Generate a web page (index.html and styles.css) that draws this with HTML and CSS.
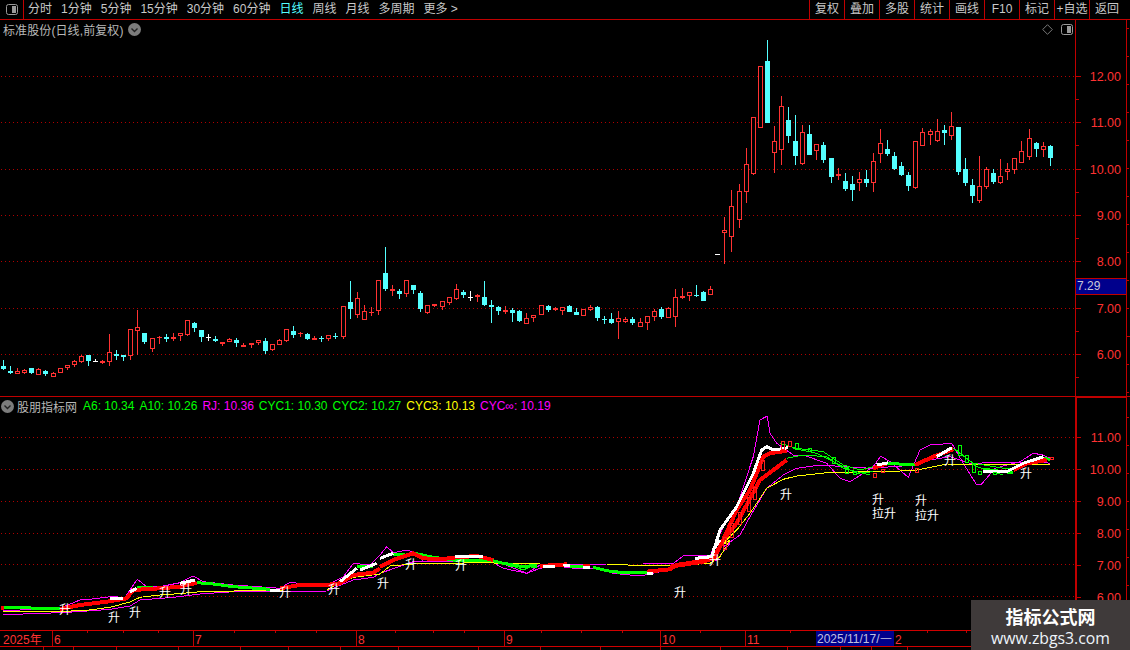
FILE: index.html
```html
<!DOCTYPE html>
<html lang="zh">
<head>
<meta charset="utf-8">
<title>股朋指标网</title>
<link rel="stylesheet" href="styles.css">
</head>
<body>
<div class="app">
  <header class="toolbar">
    <div class="panel-toggle">
      <svg class="toggle-icon" width="12" height="11" viewBox="0 0 12 11"><rect class="toggle-frame" x="0.5" y="0.5" width="11" height="10" rx="2"/><rect class="toggle-fill" x="6" y="2" width="4" height="7"/></svg>
    </div>
    <nav class="periods">
      <span>分时</span><span>1分钟</span><span>5分钟</span><span>15分钟</span><span>30分钟</span><span>60分钟</span><span class="active">日线</span><span>周线</span><span>月线</span><span>多周期</span><span>更多 &gt;</span>
    </nav>
    <nav class="actions">
      <span>复权</span><span>叠加</span><span>多股</span><span>统计</span><span>画线</span><span>F10</span><span>标记</span><span>+自选</span><span>返回</span>
    </nav>
  </header>

  <section class="pane pane-price">
    <div class="plot">
      <svg id="price-plot" class="canvas" width="1075" height="376" viewBox="0 20 1075 376"></svg>
      <div class="pane-head">
        <span class="head-title head-title-wide">标准股份(日线,前复权)</span>
        <svg class="chev" width="13" height="13" viewBox="0 0 13 13"><circle class="chev-disc" cx="6.5" cy="6.5" r="6.5"/><path class="chev-mark" d="M3.5 5.5l3 3 3-3"/></svg>
      </div>
      <div class="pane-tools">
        <svg width="11" height="11" viewBox="0 0 11 11"><path class="tool-line" d="M5.5 .7L10.3 5.5 5.5 10.3 .7 5.5z"/></svg>
        <svg class="toggle-icon" width="12" height="11" viewBox="0 0 12 11"><rect class="toggle-frame" x="0.5" y="0.5" width="11" height="10" rx="2"/><rect class="toggle-fill" x="6" y="2" width="4" height="7"/></svg>
      </div>
    </div>
    <svg id="price-axis" class="axis" width="50" height="376" viewBox="1076 20 50 376"></svg>
    <svg id="price-side" class="side" width="3" height="376" viewBox="0 0 3 376"></svg>
  </section>

  <section class="pane pane-indicator">
    <div class="plot">
      <svg id="ind-plot" class="canvas" width="1075" height="233" viewBox="0 397 1075 233"></svg>
      <div class="pane-head head-ind">
        <svg class="chev" width="13" height="13" viewBox="0 0 13 13"><circle class="chev-disc" cx="6.5" cy="6.5" r="6.5"/><path class="chev-mark" d="M3.5 5.5l3 3 3-3"/></svg>
        <span class="head-title">股朋指标网</span>
        <span class="vals">
          <span class="c-green">A6: 10.34</span><span class="c-green">A10: 10.26</span><span class="c-mag">RJ: 10.36</span><span class="c-green">CYC1: 10.30</span><span class="c-green">CYC2: 10.27</span><span class="c-yel">CYC3: 10.13</span><span class="c-mag">CYC∞: 10.19</span>
        </span>
      </div>
    </div>
    <svg id="ind-axis" class="axis" width="50" height="233" viewBox="1076 397 50 233"></svg>
    <svg id="ind-side" class="side" width="3" height="233" viewBox="0 0 3 233"></svg>
  </section>

  <svg id="time-axis" class="time-axis" width="1130" height="17" viewBox="0 630 1130 17"></svg>
  <svg id="bottom-strip" class="bottom-strip" width="1130" height="3" viewBox="0 647 1130 3"></svg>

  <aside class="watermark">
    <div class="wm-title">指标公式网</div>
    <div class="wm-url">www.zbgs3.com</div>
  </aside>
</div>
<script src="script.js"></script>
</body>
</html>
```

FILE: styles.css
```css
* { box-sizing: border-box; }
html, body { margin: 0; padding: 0; background: #000; }
body { width: 1130px; height: 650px; overflow: hidden; font-family: "Liberation Sans", "Noto Sans CJK SC", sans-serif; color: #c8c8c8; }
svg { display: block; shape-rendering: crispEdges; }
.app { position: relative; width: 1130px; height: 650px; display: flex; flex-direction: column; }

.toolbar { height: 20px; flex: none; display: flex; align-items: stretch; border-bottom: 1px solid #c00000; font-size: 12px; line-height: 19px; }
.panel-toggle { width: 24px; display: flex; align-items: center; justify-content: center; border-right: 1px solid #c00000; }
.periods { display: flex; gap: 9px; padding-left: 4px; flex: 1; white-space: nowrap; }
.periods .active { color: #54ffff; }
.actions { display: flex; }
.actions span { width: 35px; text-align: center; border-left: 1px solid #c00000; white-space: nowrap; }
.actions span:last-child { width: 41px; padding-right: 6px; }

.toggle-frame { fill: none; stroke: #9a9a9a; stroke-width: 1; shape-rendering: auto; }
.toggle-fill { fill: #9a9a9a; }
.tool-line { fill: none; stroke: #7a7a7a; stroke-width: 1; shape-rendering: auto; }
.chev { flex: none; shape-rendering: auto; }
.chev-disc { fill: #7c7c7c; }
.chev-mark { fill: none; stroke: #222; stroke-width: 1.4; }

.pane { display: flex; flex: none; border-bottom: 1px solid #c00000; }
.pane-price { height: 377px; }
.pane-indicator { height: 233px; border-bottom: 0; }
.plot { position: relative; width: 1075px; flex: none; }
.canvas { background: #000; }
.axis { flex: none; width: 52px; border-left: 1px solid #c00000; border-right: 1px solid #c00000; }
.side { flex: none; }

.pane-head { position: absolute; left: 3px; top: 0; height: 18px; display: flex; align-items: center; gap: 4px; font-size: 12px; white-space: nowrap; }
.head-ind { left: 1px; top: 0; gap: 3px; }
.head-title { color: #b8b8b8; }
.head-title-wide { letter-spacing: .1px; }
.vals { display: flex; gap: 5px; margin-left: 3px; font-size: 12px; }
.c-green { color: #00ff00; }
.c-mag { color: #ff00ff; }
.c-yel { color: #ffff00; }
.pane-tools { position: absolute; right: 2px; top: 4px; display: flex; gap: 8px; }

.dots { stroke: #b00000; stroke-width: 1; stroke-dasharray: 1 3; fill: none; shape-rendering: auto; }
.wick-c, .body-c { fill: #54ffff; }
.wick-r, .body-r, .wick-f, .body-f { fill: #ff3232; }
.wick-w, .body-w { fill: #ffffff; }
.body-in { fill: #000; }
.ln { fill: none; stroke-linejoin: round; }
.ln-mag { stroke: #ff00ff; stroke-width: 1; }
.ln-yel { stroke: #ffff00; stroke-width: 1; }
.ln-grn { stroke: #00ff00; stroke-width: 3; }
.ln-grn-thin { stroke: #00ff00; stroke-width: 1; }
.ln-red { stroke: #ff0000; stroke-width: 4; }
.ln-wht { stroke: #ffffff; stroke-width: 3; }
.bx-grn { fill: none; stroke: #00ff00; stroke-width: 1; }
.bx-red { fill: none; stroke: #ff2020; stroke-width: 1; }
.rise { font: 12px "Noto Sans CJK SC", sans-serif; fill: #fff; text-anchor: middle; }
.tick { stroke: #c00000; stroke-width: 1; }
.tick-bright { stroke: #d00000; stroke-width: 1; }
.price-txt { font: 12.5px "Liberation Sans", sans-serif; fill: #ff3232; text-anchor: end; }
.tag-bg { fill: #00008c; stroke: #c00000; stroke-width: 1; }
.tag-txt { font: 12px "Liberation Sans", sans-serif; fill: #c8c8d8; }
.time-txt { font: 12px "Liberation Sans", "Noto Sans CJK SC", sans-serif; fill: #ff3232; }
.date-bg { fill: #00008c; }
.date-txt { font: 12px "Liberation Sans", sans-serif; fill: #c0c0e0; }

.watermark { position: absolute; right: 0; bottom: 0; width: 159px; height: 50px; background: #3f3a3a; display: flex; flex-direction: column; align-items: center; justify-content: center; gap: 1px; }
.wm-title { font: bold 18px/24px "Noto Sans CJK SC", sans-serif; color: #fff; }
.wm-url { font: 15.8px/18px "Open Sans", "Liberation Sans", sans-serif; color: #eef4fa; }
```

FILE: script.js
```js
var NS = "http://www.w3.org/2000/svg";
function el(svg, tag, attrs, text) {
  var n = document.createElementNS(NS, tag);
  for (var k in attrs) n.setAttribute(k, attrs[k]);
  if (text !== undefined) n.textContent = text;
  svg.appendChild(n);
  return n;
}
var pp = document.getElementById("price-plot");
var pa = document.getElementById("price-axis");
var ps = document.getElementById("price-side");
var ip = document.getElementById("ind-plot");
var ia = document.getElementById("ind-axis");
var is = document.getElementById("ind-side");
var ta = document.getElementById("time-axis");
var bs = document.getElementById("bottom-strip");

/* ---------- grid + axes ---------- */
[76,122,169,215,261,308,354].forEach(function (y) {
  el(pp, "line", {x1: 1, x2: 1075, y1: y + .5, y2: y + .5, "class": "dots"});
});
[437,469,501,533,564,596].forEach(function (y) {
  el(ip, "line", {x1: 1, x2: 1075, y1: y + .5, y2: y + .5, "class": "dots"});
});
[[12,76],[11,122],[10,169],[9,215],[8,261],[7,308],[6,354]].forEach(function (p) {
  var y = p[1];
  el(pa, "line", {x1: 1076, x2: 1081, y1: y + .5, y2: y + .5, "class": "tick"});
  el(pa, "line", {x1: 1076, x2: 1079, y1: y + 23.5, y2: y + 23.5, "class": "tick"});
  el(pa, "text", {x: 1121, y: y + 5, "class": "price-txt"}, p[0].toFixed(2));
});
el(ia, "line", {x1: 1076.5, x2: 1076.5, y1: 397, y2: 630, "class": "tick"});
el(ia, "line", {x1: 1076, x2: 1126, y1: 397.5, y2: 397.5, "class": "tick"});
[[11,437],[10,469],[9,501],[8,533],[7,565],[6,597]].forEach(function (p) {
  el(ia, "line", {x1: 1076, x2: 1081, y1: p[1] + .5, y2: p[1] + .5, "class": "tick"});
  el(ia, "text", {x: 1121, y: p[1] + 5, "class": "price-txt"}, p[0].toFixed(2));
});
el(pa, "rect", {x: 1075, y: 278.5, width: 52, height: 16, "class": "tag-bg"});
el(pa, "text", {x: 1077, y: 290, "class": "tag-txt"}, "7.29");

for (var y = 8; y < 376; y += 28) el(ps, "line", {x1: 0, x2: 2, y1: y + .5, y2: y + .5, "class": "tick"});
el(ps, "line", {x1: 0, x2: 3, y1: 316.5, y2: 316.5, "class": "tick"});
for (y = 20; y < 233; y += 28) el(is, "line", {x1: 0, x2: 2, y1: y + .5, y2: y + .5, "class": "tick"});

/* ---------- candles ---------- */
function candles(ox, oy, rows) {
  rows.forEach(function (r) {
    var cx = Math.floor(ox + r[0] / 3);
    var wt = Math.round(oy + r[1] / 3), bt = Math.round(oy + r[2] / 3);
    var bb = Math.round(oy + r[3] / 3), wb = Math.round(oy + r[4] / 3);
    var t = r[5];
    var h = Math.max(bb - bt, 1);
    if (wb > wt) el(pp, "rect", {x: cx, y: wt, width: 1, height: wb - wt, "class": "wick-" + t});
    el(pp, "rect", {x: cx - 2, y: bt, width: 5, height: h, "class": "body-" + t});
    if (t === "r" && h > 2) el(pp, "rect", {x: cx - 1, y: bt + 1, width: 3, height: h - 2, "class": "body-in"});
  });
}
candles(0, 240, [
[10,360,378,387,390,"c"],[31,378,393,399,402,"c"],[52,385,394,401,402,"r"],[73,387,391,398,402,"r"],
[94,384,384,398,401,"c"],[115,385,388,404,405,"r"],[136,390,393,402,407,"c"],[160,396,400,410,411,"r"],
[181,385,385,399,399,"r"],[202,375,376,384,390,"r"],[223,361,364,374,381,"r"],[244,346,349,365,369,"r"],
[265,345,345,363,378,"c"],[285,357,363,365,366,"w"],[307,360,364,369,372,"f"],[328,282,337,365,378,"r"],
[349,331,342,348,360,"c"],[370,344,345,350,363,"c"],[391,267,268,349,360,"r"],[412,210,262,272,344,"r"],
[433,279,279,306,312,"c"],[457,295,295,326,336,"r"],[478,288,290,293,312,"f"],[499,282,292,296,306,"c"],
[520,279,291,297,303,"f"],[541,280,280,287,303,"r"],[562,241,241,284,288,"r"],[583,246,250,264,276,"c"],
[604,270,270,291,306,"c"],[624,282,292,294,303,"w"],[646,288,297,303,306,"c"],[667,306,307,312,318,"f"],
[688,294,297,305,306,"r"],[709,294,300,309,321,"c"],[730,309,315,320,321,"f"],[754,309,309,315,324,"f"],
[775,300,301,308,315,"r"],[796,294,303,333,342,"c"],[817,312,312,330,333,"r"],[838,297,300,315,316,"r"],
[859,267,267,303,305,"r"],[880,258,273,285,294,"c"],[901,276,279,283,291,"f"],[922,279,282,297,300,"c"],
[943,288,294,300,300,"f"],[964,288,294,297,306,"c"],[985,285,286,296,303,"r"],[1006,279,288,291,297,"c"],
[1030,198,198,291,297,"r"],[1051,123,186,207,237,"c"],[1072,156,174,224,234,"r"],[1093,195,213,240,240,"r"],
[1114,201,216,219,228,"f"],[1135,120,120,212,225,"r"]
]);
candles(380, 260, [
[16,-39,40,87,92,"c"],[37,75,87,92,108,"f"],[58,87,93,102,117,"c"],[79,60,61,101,111,"r"],
[100,75,75,90,102,"c"],[121,94,99,147,156,"c"],[142,135,136,159,162,"r"],[163,132,133,137,141,"f"],
[187,123,124,141,150,"r"],[208,111,112,129,135,"r"],[229,72,87,117,120,"r"],[250,90,96,105,114,"c"],
[271,93,112,114,123,"w"],[292,102,105,110,126,"f"],[313,63,111,135,138,"c"],[334,120,135,141,189,"c"],
[355,138,141,153,165,"c"],[376,138,151,156,162,"f"],[397,144,150,159,186,"c"],[418,150,153,183,186,"c"],
[439,159,174,191,192,"r"],[460,165,166,173,186,"r"],[484,135,135,164,165,"r"],[505,135,138,150,156,"c"],
[526,141,145,151,153,"r"],[547,141,142,152,165,"r"],[568,135,138,156,156,"c"],[589,144,156,165,165,"c"],
[610,147,147,168,168,"r"],[631,135,142,149,153,"r"],[652,138,141,174,183,"c"],[673,168,177,179,192,"c"],
[694,159,177,189,192,"c"],[715,153,175,185,237,"r"],[736,171,177,185,189,"r"],[757,171,177,189,195,"c"],
[781,174,187,200,201,"r"],[802,168,169,188,210,"r"],[823,147,153,170,183,"r"],[844,141,147,171,177,"c"],
[865,141,145,173,174,"r"],[886,87,112,170,201,"r"],[907,84,108,114,117,"f"],[928,96,97,109,123,"r"],
[949,75,105,108,111,"c"],[970,93,96,123,123,"c"],[991,78,88,104,105,"r"]
]);
candles(700, 30, [
[51,673,673,675,675,"w"],[73,561,601,610,702,"r"],[94,480,529,622,665,"r"],[118,462,484,571,593,"r"],
[139,354,403,487,519,"r"],[160,262,262,433,434,"r"],[181,109,109,295,295,"r"],[202,30,93,278,278,"c"],
[223,289,334,370,428,"r"],[244,198,229,361,405,"r"],[265,231,270,317,339,"c"],[286,255,333,378,405,"c"],
[307,285,307,403,405,"r"],[328,285,312,375,375,"c"],[349,343,343,364,390,"r"],[370,336,345,390,399,"c"],
[394,384,384,441,459,"c"],[415,414,433,439,450,"r"],[436,429,453,477,483,"c"],[457,438,462,480,513,"c"],
[478,426,448,460,483,"r"],[499,420,447,459,471,"c"],[520,369,394,458,486,"r"],[541,297,340,373,399,"r"],
[562,330,357,372,378,"c"],[583,366,378,417,420,"c"],[604,396,408,435,438,"c"],[625,426,435,468,483,"c"],
[646,334,334,473,477,"r"],[667,294,307,347,348,"r"],[691,297,304,316,345,"r"],[712,267,304,334,336,"r"],
[733,285,300,309,345,"c"],[754,246,289,319,330,"r"],[775,291,291,426,435,"c"],[796,384,417,459,468,"c"],
[817,447,465,498,519,"c"],[838,378,469,513,519,"r"],[859,411,418,470,477,"r"],[880,417,429,456,462,"c"],
[901,387,439,458,462,"r"],[922,399,418,425,450,"r"],[943,384,385,421,432,"r"],[964,333,364,398,399,"r"],
[988,297,325,380,390,"r"],[1009,336,339,357,381,"c"],[1030,336,349,361,381,"r"],[1051,345,348,384,408,"c"]
]);

/* ---------- indicator lines ---------- */
function Z(ox, oy, a) {
  var out = [];
  for (var i = 0; i < a.length; i += 2) out.push((ox + a[i] / 3).toFixed(1) + "," + (oy + a[i + 1] / 3).toFixed(1));
  return out;
}
function line(cls, pts) { el(ip, "polyline", {points: pts.join(" "), "class": "ln " + cls}); }
var A = function (a) { return Z(0, 540, a); }, B = function (a) { return Z(380, 540, a); }, C = function (a) { return Z(670, 400, a); };

/* magenta upper */
line("ln-mag", A([10,212,180,205,240,180,270,178,330,170,375,172,412,118,440,140,480,140,540,128,580,108,610,125,700,135,840,145,870,127,940,135,985,133,1030,110,1060,70,1110,75,1140,45])
  .concat(B([20,20,40,38,80,30,105,38,130,65,300,65,320,60,370,72,440,100,480,75,680,72,790,72,880,70,910,48,990,45,1020,20]))
  .concat(C([120,468,160,380,200,320,250,170,270,60,292,48,300,100,320,130,370,165,400,165,470,190,510,235,540,245,580,220,610,200,632,168,660,185,715,232,750,150,780,135,845,130,880,190,920,255,935,252,975,205,1010,195,1050,185,1090,160,1120,165,1140,175])));
/* magenta lower */
line("ln-mag", A([10,224,180,218,250,214,330,208,390,198,420,180,520,172,600,162,700,155,850,155,980,153,1010,140,1060,120,1120,112,1140,100])
  .concat(B([100,65,330,62,370,85,440,100,480,85,530,78,590,86,650,85,700,100,780,108,840,95,880,78,980,60,1010,60,1050,10]))
  .concat(C([160,440,210,405,240,350,290,265,340,225,380,205,450,195,600,205,740,195,780,180,840,170,900,190,1100,185,1140,190])));
/* yellow */
line("ln-yel", A([10,214,180,214,250,212,330,202,390,186,420,172,480,165,550,160,600,155,850,150,980,150,1010,133,1060,112,1140,102])
  .concat(B([30,78,100,72,300,68,480,72,680,72,790,77,880,77,990,70,1020,50,1050,0]))
  .concat(C([150,440,200,390,240,340,290,265,340,238,380,228,470,218,600,215,730,212,790,200,830,192,1140,195])));

/* green */
[A([3,203,180,205]),A([410,142,460,142]),A([590,128,640,132,700,140,810,148]),A([905,134,985,136]),A([1070,78,1120,78]),
 B([40,42,75,45]),B([105,40,150,50,220,60,330,60,370,70,430,80,470,75]),B([570,78,610,80]),B([640,82,680,92,720,97,800,97]),
 C([650,190,740,195]),C([940,208,1030,218]),C([1120,175,1140,178])].forEach(function (p) { line("ln-grn", p); });
[C([330,130,380,145,460,155,520,195,570,210,610,200]),C([350,175,400,165,470,170,520,205,600,225]),
 C([850,145,910,190,1000,205,1030,205]),C([370,145,440,160,500,190,560,220,610,215]),C([860,150,920,200,1000,225]),
 B([370,68,430,90,470,72]),B([390,78,470,82])].forEach(function (p) { line("ln-grn-thin", p); });

/* red */
[A([3,205,12,205]),A([180,207,240,195,320,185,380,175,400,150,480,145,540,140,590,128]),A([840,145,900,135,980,135,1020,130,1060,105,1120,98,1140,85]),
 B([0,80,40,60,100,40,130,55,180,58,230,52,290,48,340,60]),B([480,78,530,75,560,73]),B([610,78,630,78]),B([800,95,870,88,890,75,950,65,1000,50,1020,20]),
 C([0,500,100,485,130,475,150,440,200,330,240,270,280,170,300,160,350,152]),C([130,480,160,420,200,370,270,240,310,210,350,180]),
 C([610,205,650,190]),C([735,195,790,170,850,148]),C([1030,210,1070,190,1130,180])].forEach(function (p) { line("ln-red", p); });

/* white */
[A([330,175,370,177]),A([390,155,410,145]),A([540,130,585,120]),A([810,150,840,150]),A([1020,125,1070,85]),A([1080,90,1130,70]),
 B([0,55,40,40]),B([225,48,310,48]),B([490,80,525,80]),B([550,75,570,76]),B([610,82,630,82]),B([800,100,820,100]),B([945,55,990,50]),B([1000,30,1020,0]),
 C([80,475,125,470,150,390,200,320,250,220,275,150,290,140,310,150,355,143]),C([620,195,655,188]),C([800,170,845,143]),C([940,215,1010,215,1060,190,1120,170])
].forEach(function (p) { line("ln-wht", p); });

/* small indicator boxes */
function boxes(cls, list) {
  list.forEach(function (b) {
    el(ip, "rect", {x: Math.round(670 + b[0] / 3) + .5, y: Math.round(400 + b[1] / 3) + .5, width: 3, height: b[2], "class": cls});
  });
}
boxes("bx-grn", [[375,128,6],[415,145,3],[485,170,6],[525,200,6],[548,214,3],[865,136,10],[885,165,7],[905,192,8],[925,214,3],[970,216,2]]);
boxes("bx-red", [[230,290,14],[205,335,12],[180,368,14],[160,410,12],[272,180,10],[250,260,12],[333,122,8],[355,122,5],[610,220,4],[632,208,3],[735,205,4],[1140,170,2]]);

/* rise signals */
[[65,614,"升"],[114,622,"升"],[135,617,"升"],[165,597,"升"],[186,594,"升"],[285,597,"升"],[334,594,"升"],[383,588,"升"],
 [411,569,"升"],[461,570,"升"],[680,597,"升"],[715,565,"升"],[786,499,"升"],[878,504,"升"],[884,518,"拉升"],[921,505,"升"],[927,520,"拉升"],[950,465,"升"],[1026,478,"升"]
].forEach(function (r) { el(ip, "text", {x: r[0], y: r[1], "class": "rise"}, r[2]); });

/* ---------- time axis ---------- */
el(ta, "line", {x1: 0, x2: 1130, y1: 630.5, y2: 630.5, "class": "tick-bright"});
el(ta, "line", {x1: 0, x2: 1130, y1: 646.5, y2: 646.5, "class": "tick-bright"});
[52,193,356,504,660,745].forEach(function (x) {
  el(ta, "line", {x1: x + .5, x2: x + .5, y1: 631, y2: 646, "class": "tick"});
});
[87,123,158,234,275,316,395,433,464,541,581,622,700,790,850,927,966].forEach(function (x) {
  el(ta, "line", {x1: x + .5, x2: x + .5, y1: 631, y2: 633, "class": "tick"});
});
el(ta, "text", {x: 3, y: 644, "class": "time-txt"}, "2025年");
[[54,"6"],[195,"7"],[358,"8"],[506,"9"],[662,"10"],[747,"11"],[895,"2"]].forEach(function (t) {
  el(ta, "text", {x: t[0], y: 644, "class": "time-txt"}, t[1]);
});
el(ta, "rect", {x: 816, y: 631, width: 78, height: 15, "class": "date-bg"});
el(ta, "text", {x: 817, y: 643, "class": "date-txt"}, "2025/11/17/一");
/* ---------- bottom strip ---------- */
[43,73,116,178,240,288,340,398,478,540,600,660,720,787,840,871,907].forEach(function (x) {
  el(bs, "line", {x1: x + .5, x2: x + .5, y1: 647, y2: 650, "class": "tick"});
});
```
